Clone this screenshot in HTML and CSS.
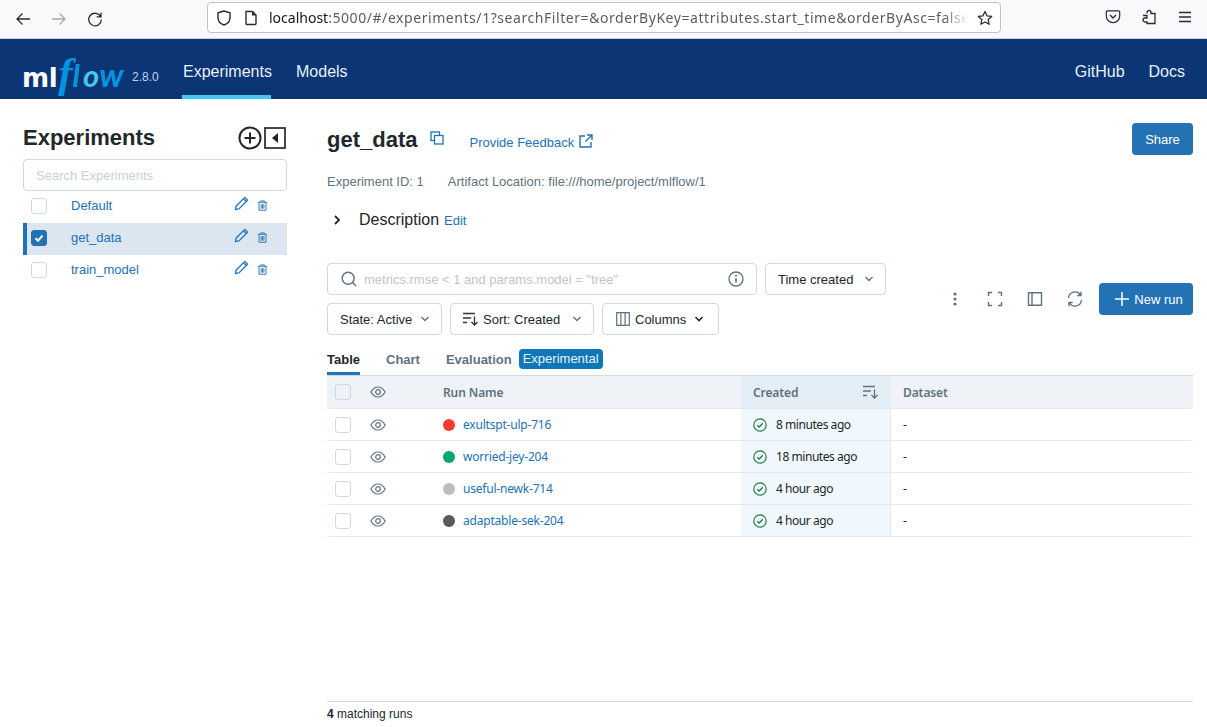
FILE: index.html
```html
<!DOCTYPE html>
<html lang="en">
<head>
<meta charset="utf-8">
<title>MLflow</title>
<link rel="stylesheet" href="styles.css">
</head>
<body>
<div class="browser">
  <div class="nav-btns">
    <svg class="bi" viewBox="0 0 16 16"><path d="M15 8H2M7.5 2.5 2 8l5.5 5.5" fill="none" stroke="#2b2a33" stroke-width="1.3"/></svg>
    <svg class="bi" viewBox="0 0 16 16"><path d="M1 8h13M8.5 2.5 14 8l-5.500 5.500" fill="none" stroke="#a9a9ad" stroke-width="1.3"/></svg>
    <svg class="bi" viewBox="0 0 16 16"><path d="M13.500 5.500A6.300 6.300 0 1 0 14.300 8.500M14 1.500v4.300H9.700" fill="none" stroke="#2b2a33" stroke-width="1.300"/></svg>
  </div>
  <div class="urlbar">
    <svg class="shield" viewBox="0 0 16 16"><path d="M8 1 2 2.800v5C2 11.500 5 14 8 15c3-1 6-3.500 6-7.200v-5z" fill="none" stroke="#2b2a33" stroke-width="1.400"/></svg>
    <svg class="page" viewBox="0 0 16 16"><path d="M3 1.500h6.500L13 5v8.500a1 1 0 0 1-1 1H4a1 1 0 0 1-1-1z" fill="none" stroke="#2b2a33" stroke-width="1.400"/><path d="M9 1.500V5.500h4" fill="#2b2a33"/></svg>
    <div class="url"><span class="host">localhost</span>:5000/#/experiments/1?searchFilter=&amp;orderByKey=attributes.start_time&amp;orderByAsc=false</div>
    <svg class="star" viewBox="0 0 16 16"><path d="M8 1.500l2 4.300 4.700.6-3.500 3.200.9 4.700L8 12l-4.100 2.300.9-4.700L1.300 6.400 6 5.800z" fill="none" stroke="#2b2a33" stroke-width="1.300" stroke-linejoin="round"/></svg>
  </div>
  <div class="ext-btns">
    <svg class="bi" viewBox="0 0 16 16"><path d="M2.500 1.800h11a1.200 1.200 0 0 1 1.200 1.200v4a6.700 6.700 0 0 1-13.400 0V3a1.200 1.200 0 0 1 1.200-1.200z" fill="none" stroke="#2b2a33" stroke-width="1.200"/><path d="M5 6l3 3 3-3" fill="none" stroke="#2b2a33" stroke-width="1.400"/></svg>
    <svg class="bi" viewBox="0 0 16 16"><path d="M6 4V3a2 2 0 0 1 4 0v1h4v10H6v-1.500H4a2 2 0 0 1 0-4h2V6H2" fill="none" stroke="#2b2a33" stroke-width="1.300" transform="translate(0 .5)"/></svg>
    <svg class="bi" viewBox="0 0 16 16"><path d="M2 3.500h12M2 8h12M2 12.500h12" stroke="#2b2a33" stroke-width="1.300"/></svg>
  </div>
</div>
<header class="topbar">
  <div class="logo"><span class="logo-ml">ml</span><span class="logo-f">f</span><span class="logo-l">l</span><span class="logo-o">o</span><span class="logo-w">w</span></div>
  <span class="version">2.8.0</span>
  <nav class="topnav">
    <a class="topnav-item active">Experiments</a>
    <a class="topnav-item">Models</a>
  </nav>
  <nav class="topnav-right">
    <a class="topnav-link">GitHub</a>
    <a class="topnav-link">Docs</a>
  </nav>
</header>
<div class="main">
  <aside class="sidebar">
    <div class="side-head">
      <h2 class="side-title">Experiments</h2>
      <div class="side-tools">
        <svg class="side-plus" viewBox="0 0 24 24"><circle cx="12" cy="12" r="10.500" fill="none" stroke="#21272b" stroke-width="2"/><path d="M12 6.500v11M6.500 12h11" stroke="#21272b" stroke-width="2"/></svg>
        <svg class="side-collapse" viewBox="0 0 22 22"><rect x="1" y="1" width="20" height="20" fill="none" stroke="#333" stroke-width="1.800"/><path d="M14 6v10l-6-5z" fill="#222"/></svg>
      </div>
    </div>
    <div class="side-search">Search Experiments</div>
    <ul class="exp-list">
      <li class="exp"><span class="check"></span><span class="exp-name">Default</span>
        <svg class="pencil" viewBox="0 0 16 16"><path d="M1.500 14.500l.8-3.800L11.500 1.500l3 3-9.200 9.200zM10 3l3 3" fill="none" stroke="#2272b4" stroke-width="1.400" stroke-linejoin="round"/></svg>
        <svg class="trash" viewBox="0 0 12 12"><path d="M1 2.500h10M4 2.500V1h4v1.500M2.200 2.500v8.700h7.600V2.500M4.500 4.500v5M6 4.500v5M7.500 4.500v5" fill="none" stroke="#2272b4" stroke-width="1"/></svg>
      </li>
      <li class="exp selected"><span class="check checked"><svg viewBox="0 0 12 12"><path d="M2.500 6.200 5 8.700l4.500-5" fill="none" stroke="#fff" stroke-width="2"/></svg></span><span class="exp-name">get_data</span>
        <svg class="pencil" viewBox="0 0 16 16"><path d="M1.500 14.500l.8-3.800L11.500 1.500l3 3-9.200 9.200zM10 3l3 3" fill="none" stroke="#2272b4" stroke-width="1.400" stroke-linejoin="round"/></svg>
        <svg class="trash" viewBox="0 0 12 12"><path d="M1 2.500h10M4 2.500V1h4v1.500M2.200 2.500v8.700h7.600V2.500M4.500 4.500v5M6 4.500v5M7.500 4.500v5" fill="none" stroke="#2272b4" stroke-width="1"/></svg>
      </li>
      <li class="exp"><span class="check"></span><span class="exp-name">train_model</span>
        <svg class="pencil" viewBox="0 0 16 16"><path d="M1.500 14.500l.8-3.800L11.500 1.500l3 3-9.200 9.200zM10 3l3 3" fill="none" stroke="#2272b4" stroke-width="1.400" stroke-linejoin="round"/></svg>
        <svg class="trash" viewBox="0 0 12 12"><path d="M1 2.500h10M4 2.500V1h4v1.500M2.200 2.500v8.700h7.600V2.500M4.500 4.500v5M6 4.500v5M7.500 4.500v5" fill="none" stroke="#2272b4" stroke-width="1"/></svg>
      </li>
    </ul>
  </aside>
  <main class="content">
    <div class="title-row">
      <div class="title-left">
        <h1 class="exp-title">get_data</h1>
        <svg class="copy" viewBox="0 0 14 14"><rect x="1" y="1" width="8.500" height="8.500" fill="none" stroke="#2272b4" stroke-width="1.300"/><rect x="4.500" y="4.500" width="8.500" height="8.500" fill="#fff" stroke="#2272b4" stroke-width="1.300"/></svg>
        <a class="feedback">Provide Feedback</a>
        <svg class="ext" viewBox="0 0 14 14"><path d="M6 2H1v11h11V8M8 1h5v5M13 1 6.500 7.500" fill="none" stroke="#2272b4" stroke-width="1.400"/></svg>
      </div>
      <button class="btn-primary share">Share</button>
    </div>
    <div class="meta"><span class="meta-id">Experiment ID: 1</span><span>Artifact Location: file:///home/project/mlflow/1</span></div>
    <div class="desc">
      <svg class="chev-right" viewBox="0 0 10 10"><path d="M3 1l4 4-4 4" fill="none" stroke="#21272b" stroke-width="1.800"/></svg>
      <span class="desc-label">Description</span><a class="desc-edit">Edit</a>
    </div>
    <div class="controls">
      <div class="filters">
        <div class="filter-row">
          <div class="search-box">
            <svg class="mag" viewBox="0 0 16 16"><circle cx="7.200" cy="7.200" r="6" fill="none" stroke="#5f7281" stroke-width="1.400"/><path d="M11.500 11.500l3.500 3.500" stroke="#5f7281" stroke-width="1.400"/></svg>
            <span class="placeholder">metrics.rmse &lt; 1 and params.model = "tree"</span>
            <svg class="info" viewBox="0 0 16 16"><circle cx="8" cy="8" r="7" fill="none" stroke="#5f7281" stroke-width="1.300"/><path d="M8 7v4.500" stroke="#5f7281" stroke-width="1.500"/><circle cx="8" cy="4.800" r="1" fill="#5f7281"/></svg>
          </div>
          <button class="select time">Time created<svg class="caret time-caret" viewBox="0 0 10 6"><path d="M1.500 1 5 4.500 8.500 1" fill="none" stroke="#5f7281" stroke-width="1.400"/></svg></button>
        </div>
        <div class="filter-row">
          <button class="select state">State: Active<svg class="caret" viewBox="0 0 10 6"><path d="M1.500 1 5 4.500 8.500 1" fill="none" stroke="#5f7281" stroke-width="1.400"/></svg></button>
          <button class="select sort">
            <svg class="sort-ico" viewBox="0 0 16 14"><path d="M0 1.500h12M0 6h8M0 10.500h4" stroke="#333" stroke-width="1.300"/><path d="M11.500 4.500V13M8.500 10l3 3 3-3" fill="none" stroke="#333" stroke-width="1.300"/></svg>
            Sort: Created<svg class="caret sort-caret" viewBox="0 0 10 6"><path d="M1.500 1 5 4.500 8.500 1" fill="none" stroke="#5f7281" stroke-width="1.400"/></svg></button>
          <button class="select cols">
            <svg class="col-ico" viewBox="0 0 14 14"><path d="M.7.7h12.600v12.600H.7zM4.900.7v12.600M9.100.7v12.600" fill="none" stroke="#5f7281" stroke-width="1.200"/></svg>
            Columns<svg class="caret" viewBox="0 0 10 6"><path d="M1.500 1 5 4.500 8.500 1" fill="none" stroke="#21272b" stroke-width="1.600"/></svg></button>
        </div>
      </div>
      <div class="actions">
        <span class="act"><svg viewBox="0 0 16 16" width="16" height="16"><circle cx="8" cy="3" r="1.600" fill="#5f7281"/><circle cx="8" cy="8" r="1.600" fill="#5f7281"/><circle cx="8" cy="13" r="1.600" fill="#5f7281"/></svg></span>
        <span class="act"><svg viewBox="0 0 16 16" width="16" height="16"><path d="M1.500 5V1.500H5M11 1.500h3.500V5M14.500 11v3.500H11M5 14.500H1.500V11" fill="none" stroke="#5f7281" stroke-width="1.400"/></svg></span>
        <span class="act"><svg viewBox="0 0 16 16" width="16" height="16"><path d="M1.500 1.700h13v12.600h-13zM5 1.700v12.600" fill="none" stroke="#5f7281" stroke-width="1.400"/></svg></span>
        <span class="act"><svg viewBox="0 0 16 16" width="16" height="16"><path d="M1.500 7A6.500 6.500 0 0 1 13.500 4M14.500 9a6.500 6.500 0 0 1-12 3M14 .8v3.700h-3.700M2 15.200v-3.700h3.700" fill="none" stroke="#5f7281" stroke-width="1.400"/></svg></span>
        <button class="btn-primary newrun"><svg class="plus" viewBox="0 0 14 14"><path d="M7 0v14M0 7h14" stroke="#fff" stroke-width="1.500"/></svg>New run</button>
      </div>
    </div>
    <div class="tabs">
      <span class="tab tab-active">Table</span>
      <span class="tab">Chart</span>
      <span class="tab tab-eval">Evaluation</span>
      <span class="badge">Experimental</span>
    </div>
    <div class="table">
      <div class="row head">
        <div class="cell"><span class="check tcheck head-check"></span></div>
        <div class="cell"><svg class="eye" viewBox="0 0 16 12"><path d="M.8 6C3 2.400 5.300 1 8 1s5 1.400 7.200 5C13 9.600 10.700 11 8 11S3 9.600.8 6z" fill="none" stroke="#5f7281" stroke-width="1.200"/><circle cx="8" cy="6" r="2.300" fill="none" stroke="#5f7281" stroke-width="1.200"/></svg></div>
        <div class="cell name">Run Name</div>
        <div class="cell created">Created<svg class="sort-small" viewBox="0 0 16 14"><path d="M0 1.500h12M0 6h8M0 10.500h4" stroke="#5f7281" stroke-width="1.300"/><path d="M11.500 4.500V13M8.500 10l3 3 3-3" fill="none" stroke="#5f7281" stroke-width="1.300"/></svg></div>
        <div class="cell name">Dataset</div>
      </div>
      <div class="row">
        <div class="cell"><span class="check tcheck"></span></div>
        <div class="cell"><svg class="eye" viewBox="0 0 16 12"><path d="M.8 6C3 2.400 5.300 1 8 1s5 1.400 7.200 5C13 9.600 10.700 11 8 11S3 9.600.8 6z" fill="none" stroke="#5f7281" stroke-width="1.200"/><circle cx="8" cy="6" r="2.300" fill="none" stroke="#5f7281" stroke-width="1.200"/></svg></div>
        <div class="cell name"><span class="dot red"></span><a class="run">exultspt-ulp-716</a></div>
        <div class="cell created"><svg class="ok" viewBox="0 0 14 14"><circle cx="7" cy="7" r="6.200" fill="none" stroke="#277c43" stroke-width="1.200"/><path d="M4.200 7.200 6.200 9l3.600-3.800" fill="none" stroke="#277c43" stroke-width="1.300"/></svg><span>8 minutes ago</span></div>
        <div class="cell name">-</div>
      </div>
      <div class="row">
        <div class="cell"><span class="check tcheck"></span></div>
        <div class="cell"><svg class="eye" viewBox="0 0 16 12"><path d="M.8 6C3 2.400 5.300 1 8 1s5 1.400 7.200 5C13 9.600 10.700 11 8 11S3 9.600.8 6z" fill="none" stroke="#5f7281" stroke-width="1.200"/><circle cx="8" cy="6" r="2.300" fill="none" stroke="#5f7281" stroke-width="1.200"/></svg></div>
        <div class="cell name"><span class="dot green"></span><a class="run">worried-jey-204</a></div>
        <div class="cell created"><svg class="ok" viewBox="0 0 14 14"><circle cx="7" cy="7" r="6.200" fill="none" stroke="#277c43" stroke-width="1.200"/><path d="M4.200 7.200 6.200 9l3.600-3.800" fill="none" stroke="#277c43" stroke-width="1.300"/></svg><span>18 minutes ago</span></div>
        <div class="cell name">-</div>
      </div>
      <div class="row">
        <div class="cell"><span class="check tcheck"></span></div>
        <div class="cell"><svg class="eye" viewBox="0 0 16 12"><path d="M.8 6C3 2.400 5.300 1 8 1s5 1.400 7.200 5C13 9.600 10.700 11 8 11S3 9.600.8 6z" fill="none" stroke="#5f7281" stroke-width="1.200"/><circle cx="8" cy="6" r="2.300" fill="none" stroke="#5f7281" stroke-width="1.200"/></svg></div>
        <div class="cell name"><span class="dot grey"></span><a class="run">useful-newk-714</a></div>
        <div class="cell created"><svg class="ok" viewBox="0 0 14 14"><circle cx="7" cy="7" r="6.200" fill="none" stroke="#277c43" stroke-width="1.200"/><path d="M4.200 7.200 6.200 9l3.600-3.800" fill="none" stroke="#277c43" stroke-width="1.300"/></svg><span>4 hour ago</span></div>
        <div class="cell name">-</div>
      </div>
      <div class="row">
        <div class="cell"><span class="check tcheck"></span></div>
        <div class="cell"><svg class="eye" viewBox="0 0 16 12"><path d="M.8 6C3 2.400 5.300 1 8 1s5 1.400 7.200 5C13 9.600 10.700 11 8 11S3 9.600.8 6z" fill="none" stroke="#5f7281" stroke-width="1.200"/><circle cx="8" cy="6" r="2.300" fill="none" stroke="#5f7281" stroke-width="1.200"/></svg></div>
        <div class="cell name"><span class="dot dark"></span><a class="run">adaptable-sek-204</a></div>
        <div class="cell created"><svg class="ok" viewBox="0 0 14 14"><circle cx="7" cy="7" r="6.200" fill="none" stroke="#277c43" stroke-width="1.200"/><path d="M4.200 7.200 6.200 9l3.600-3.800" fill="none" stroke="#277c43" stroke-width="1.300"/></svg><span>4 hour ago</span></div>
        <div class="cell name">-</div>
      </div>
    </div>
    <div class="footer"><b>4</b> matching runs</div>
  </main>
</div>
</body>
</html>
```
FILE: styles.css
```css
* { box-sizing: border-box; }
html, body { margin: 0; padding: 0; height: 727px; overflow: hidden; }
body { font-family: "Liberation Sans", Arial, sans-serif; font-size: 13px; color: #21272b; background: #fff; }
a { color: #2272b4; text-decoration: none; }
svg { display: block; flex: none; }
button { font: inherit; color: inherit; }

.browser { height: 39px; background: #f9f9fb; border-bottom: 1px solid #cfcfd3; display: flex; align-items: center; padding: 0 14px 1px 15px; }
.nav-btns { display: flex; gap: 20px; width: 192px; flex: none; }
.bi { width: 16px; height: 16px; }
.urlbar { width: 794px; height: 31px; flex: none; margin-top: -2px; border: 1px solid #c4c4c8; border-radius: 4px; background: #fff; display: flex; align-items: center; padding: 0 7px 0 8px; }
.shield { width: 16px; height: 16px; }
.page { width: 16px; height: 16px; margin-left: 11px; }
.url { flex: 1; min-width: 0; margin: 0 9px 0 10px; font-family: "Noto Sans", sans-serif; font-size: 14px; letter-spacing: .56px; color: #5b5b66; white-space: nowrap; overflow: hidden; -webkit-mask-image: linear-gradient(to left, transparent 0, #000 24px); mask-image: linear-gradient(to left, transparent 0, #000 24px); }
.host { color: #15141a; letter-spacing: 0; }
.star { width: 16px; height: 16px; }
.ext-btns { display: flex; gap: 20px; margin-left: 104px; margin-top: -4px; }

.topbar { height: 60px; background: #0b3574; display: flex; align-items: stretch; padding-left: 23px; padding-right: 22px; }
.logo { display: flex; align-items: baseline; height: 60px; padding-top: 14px; line-height: 40px; width: 109px; white-space: nowrap; }
.logo-ml { color: #fff; font-family: "DejaVu Sans", sans-serif; font-weight: 700; font-size: 26px; letter-spacing: -.4px; margin-left: -1px; }
.logo-f { color: #0194e2; font-family: "Liberation Serif", serif; font-style: italic; font-weight: 700; font-size: 43px; margin-left: 1px; }
.logo-l { color: #0194e2; font-family: Lato, sans-serif; font-style: italic; font-weight: 700; font-size: 31px; }
.logo-o { color: #43c9ed; font-family: Lato, sans-serif; font-style: italic; font-weight: 700; font-size: 31px; margin-left: 3px; }
.logo-w { color: #0194e2; font-family: Lato, sans-serif; font-style: italic; font-weight: 700; font-size: 33px; }
.version { color: #c5d3e6; font-size: 12px; align-self: flex-end; margin-bottom: 15px; width: 50px; }
.topnav { display: flex; gap: 24px; }
.topnav-item { color: #e6f1f5; font-size: 16px; line-height: 65px; height: 60px; padding-left: 1px; }
.topnav-item.active { border-bottom: 4px solid #43c9ed; width: 89px; white-space: nowrap; }
.topnav-right { margin-left: auto; display: flex; gap: 24px; }
.topnav-link { color: #e6f1f5; font-size: 16px; line-height: 65px; }

.main { display: flex; height: 628px; }
.sidebar { width: 304px; padding: 21px 0 0 23px; flex: none; }
.side-head { width: 264px; height: 39px; padding-bottom: 3px; display: flex; align-items: center; justify-content: space-between; }
.side-title { font-size: 22px; font-weight: 700; margin: 0; line-height: 30px; }
.side-tools { display: flex; align-items: center; gap: 2px; margin: 0 1px 1px 0; }
.side-plus { width: 24px; height: 24px; }
.side-collapse { width: 22px; height: 22px; }
.side-search { width: 264px; height: 32px; margin-top: 0; border: 1px solid #cdd9e3; border-radius: 4px; padding: 0 12px; line-height: 31px; color: #c5d1dc; }
.exp-list { list-style: none; margin: 0; padding: 0; width: 264px; }
.exp { height: 32px; display: flex; align-items: center; padding-left: 8px; padding-bottom: 4px; }
.exp.selected { background: #dce6f1; border-left: 4px solid #2272b4; padding-left: 4px; }
.check { width: 16px; height: 16px; border: 1px solid #cdd9e3; border-radius: 3px; background: #fff; flex: none; display: flex; align-items: center; justify-content: center; }
.exp .check { margin-top: 2px; }
.checked { background: #2272b4; border-color: #2272b4; }
.checked svg { width: 12px; height: 12px; }
.exp-name { color: #2272b4; margin-left: 24px; flex: 1; }
.pencil { width: 15px; height: 15px; margin-bottom: 3px; }
.trash { width: 11px; height: 11px; margin: 0 19px 0 8px; }

.content { flex: 1; padding-right: 14px; padding-left: 23px; display: flex; flex-direction: column; min-width: 0; }
.title-row { display: flex; justify-content: space-between; height: 56px; padding-top: 24px; }
.title-left { display: flex; align-items: flex-start; }
.exp-title { font-size: 22px; line-height: 32px; margin: 1px 0 0; font-weight: 700; }
.copy { width: 14px; height: 14px; margin: 8px 0 0 13px; }
.feedback { font-size: 13px; margin: 10px 0 0 25px; line-height: 20px; }
.ext { width: 14px; height: 14px; margin: 11px 0 0 5px; }
.btn-primary { background: #2272b4; color: #fff; border: 0; border-radius: 4px; font-size: 13px; }
.share { width: 61px; height: 32px; }
.meta { margin-top: 18px; color: #5f7281; line-height: 18px; display: flex; }
.meta-id { margin-right: 24px; }
.desc { display: flex; align-items: center; height: 24px; margin-top: 17px; }
.chev-right { width: 10px; height: 10px; margin-left: 5px; }
.desc-label { font-size: 16px; margin-left: 17px; }
.desc-edit { margin-left: 5px; }

.controls { display: flex; justify-content: space-between; align-items: center; margin-top: 31px; }
.filters { display: flex; flex-direction: column; gap: 8px; }
.filter-row { display: flex; gap: 8px; }
.search-box { width: 430px; height: 32px; border: 1px solid #cdd9e3; border-radius: 4px; display: flex; align-items: center; padding: 0 12px 0 13px; }
.mag { width: 16px; height: 16px; }
.placeholder { flex: 1; margin-left: 7px; color: #c4c4c4; }
.info { width: 16px; height: 16px; }
.select { height: 32px; border: 1px solid #cdd9e3; border-radius: 4px; background: #fff; display: flex; align-items: center; padding: 0 12px; white-space: nowrap; }
.caret { width: 10px; height: 6px; margin-left: 8px; }
.time-caret { margin-left: 11px; }
.time { width: 121px; }
.state { width: 115px; }
.sort { width: 144px; }
.sort-ico { width: 16px; height: 14px; margin-right: 4px; }
.sort-caret { margin-left: 12px; }
.cols { width: 117px; padding-left: 13px; }
.col-ico { width: 14px; height: 14px; margin-right: 5px; }
.actions { display: flex; align-items: center; gap: 8px; }
.act { width: 32px; height: 32px; display: flex; align-items: center; justify-content: center; }
.newrun { width: 94px; height: 32px; display: flex; align-items: center; justify-content: center; gap: 5px; padding-left: 6px; padding-right: 0; }
.plus { width: 14px; height: 14px; }

.tabs { display: flex; align-items: flex-start; height: 27px; margin-top: 13px; font-weight: 700; color: #5f7281; }
.tab { margin-right: 26px; line-height: 24px; height: 27px; }
.tab-active { color: #21272b; border-bottom: 3px solid #2272b4; }
.tab-eval { margin-right: 7px; }
.badge { background: #0f76b8; color: #e8f3fb; font-weight: 400; border-radius: 4px; height: 20px; line-height: 20px; margin-top: 1px; padding: 0 4px; width: 84px; }

.table { border-top: 1px solid #cdd9e3; font-family: "Noto Sans", sans-serif; font-size: 12px; letter-spacing: -.2px; }
.row { display: grid; grid-template-columns: 36px 68px 310px 150px 1fr; height: 32px; border-bottom: 1px solid #e5e9ed; }
.head { height: 33px; background: #eff3f7; color: #5f7281; font-weight: 600; letter-spacing: -.1px; }
.cell { display: flex; align-items: center; min-width: 0; }
.tcheck { margin-left: 8px; }
.head-check { background: transparent; }
.eye { width: 16px; height: 12px; margin-left: 7px; }
.name { padding-left: 12px; }
.created { padding-left: 12px; background: #f0f7fd; border-right: 1px solid #e3ebf2; letter-spacing: -.45px; }
.head .created { background: #e4eef7; border-right: 0; letter-spacing: -.1px; }
.sort-small { width: 16px; height: 14px; margin-left: auto; margin-right: 12px; }
.ok { width: 14px; height: 14px; margin-right: 9px; }
.dot { width: 12px; height: 12px; border-radius: 50%; margin-right: 8px; flex: none; }
.red { background: #ff3b30; }
.green { background: #00a86b; }
.grey { background: #bdbdbd; }
.dark { background: #5a5a5a; }

.footer { margin-top: auto; height: 26px; border-top: 1px solid #d4d9de; font-size: 12px; line-height: 25px; }
```
